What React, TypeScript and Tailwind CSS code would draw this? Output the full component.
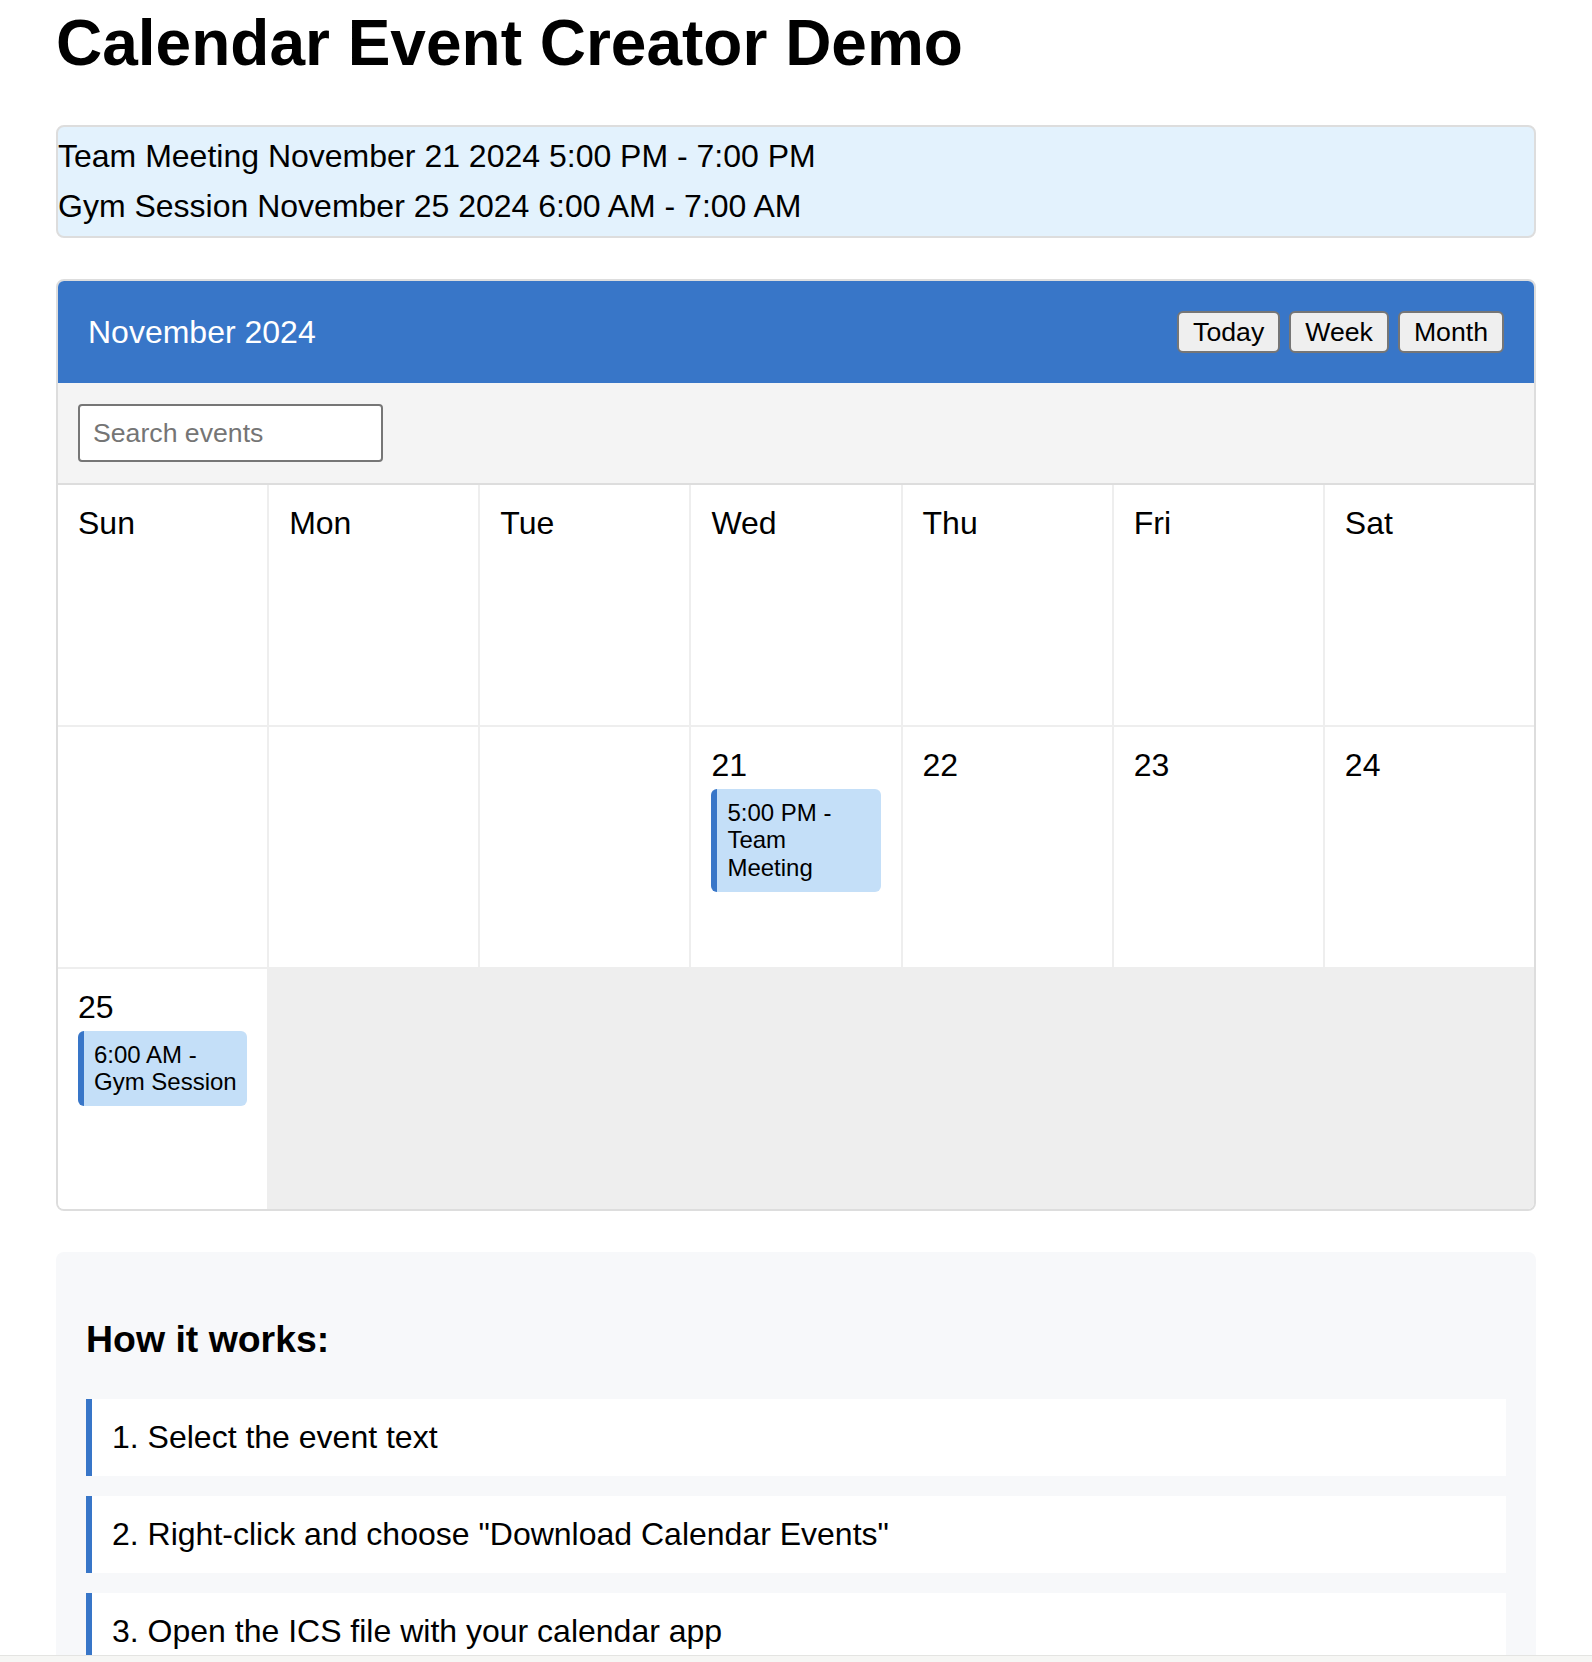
import React from "react";

const days = ["Sun", "Mon", "Tue", "Wed", "Thu", "Fri", "Sat"];

function Chip({ children }: { children: React.ReactNode }) {
  return (
    <div className="mt-[5px] rounded-[6px] border-l-[6px] border-[#3876c8] bg-[#c4dff8] py-[10px] pl-[10px] pr-[6px] text-[24px] leading-[27.6px] text-black">
      {children}
    </div>
  );
}

function Cell({ label, children }: { label?: string; children?: React.ReactNode }) {
  return (
    <div className="min-h-[240px] bg-white p-[20px]">
      {label && <div className="text-[32px] leading-[36.8px] text-black">{label}</div>}
      {children}
    </div>
  );
}

export default function App() {
  return (
    <div
      className="min-h-[1662px] bg-white px-[56px] pt-[6px] text-black"
      style={{ fontFamily: '"Liberation Sans", Arial, Helvetica, sans-serif' }}
    >
      <h1 className="h-[74px] text-[64px] font-bold leading-[74px] text-black">Calendar Event Creator Demo</h1>

      <div className="mt-[45px] rounded-[8px] border-2 border-[#dddddd] bg-[#e3f2fd] px-0 pb-[5px] pt-[4px] text-[32px] leading-[50px]">
        <div>Team Meeting November 21 2024 5:00 PM - 7:00 PM</div>
        <div>Gym Session November 25 2024 6:00 AM - 7:00 AM</div>
      </div>

      <div className="mt-[41px] overflow-hidden rounded-[8px] border-2 border-[#dddddd]">
        <div className="flex h-[102px] items-center justify-between bg-[#3876c8] px-[30px]">
          <div className="text-[32px] leading-[37px] text-white">November 2024</div>
          <div className="flex gap-[9px]">
            {["Today", "Week", "Month"].map((b) => (
              <button
                key={b}
                className="h-[42px] rounded-[6px] border-2 border-[#767676] bg-[#efefef] px-[14px] text-[26.67px] leading-[30px] text-black"
              >
                {b}
              </button>
            ))}
          </div>
        </div>

        <div className="border-b-2 border-[#dddddd] bg-[#f4f4f4] px-[20px] py-[21px]">
          <input
            placeholder="Search events"
            className="h-[58px] w-[305px] rounded-[4px] border-2 border-[#767676] bg-white px-[13px] text-[26.67px] text-black outline-none placeholder:text-[#757575]"
          />
        </div>

        <div className="grid grid-cols-7 gap-[2px] bg-[#eeeeee]">
          {days.map((d) => (
            <Cell key={d} label={d} />
          ))}
          <Cell />
          <Cell />
          <Cell />
          <Cell label="21">
            <Chip>5:00 PM - Team Meeting</Chip>
          </Cell>
          <Cell label="22" />
          <Cell label="23" />
          <Cell label="24" />
          <Cell label="25">
            <Chip>6:00 AM - Gym Session</Chip>
          </Cell>
        </div>
      </div>

      <div className="mt-[41px] rounded-[8px] bg-[#f7f8fa] px-[30px] pb-[30px] pt-[30px]">
        <h3 className="mb-[38px] mt-[36px] text-[37.44px] font-bold leading-[43px]">How it works:</h3>
        <div className="flex flex-col gap-[20px]">
          {[
            "1. Select the event text",
            '2. Right-click and choose "Download Calendar Events"',
            "3. Open the ICS file with your calendar app",
          ].map((s) => (
            <div key={s} className="border-l-[6px] border-[#3876c8] bg-white py-[20px] pl-[20px] text-[32px] leading-[36.8px]">
              {s}
            </div>
          ))}
        </div>
      </div>

      <div className="fixed bottom-0 left-0 right-0 h-[7px] border-t border-[#e4e4e2] bg-[#f6f6f4]" />
    </div>
  );
}
